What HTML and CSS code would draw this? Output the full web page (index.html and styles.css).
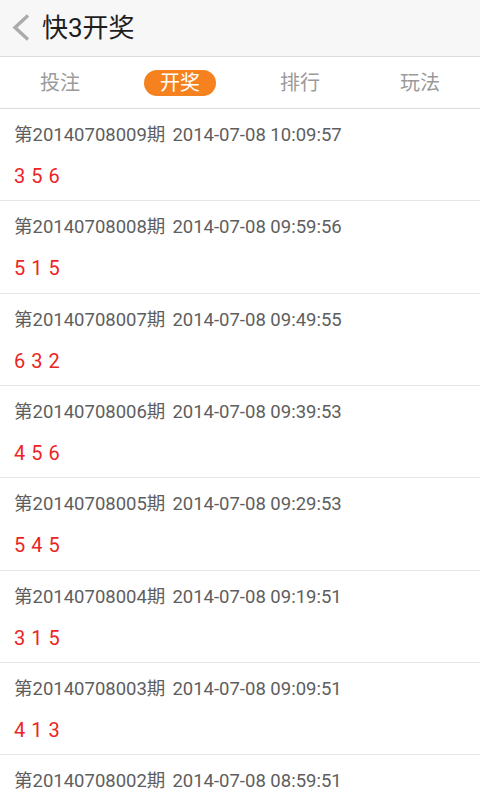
FILE: index.html
```html
<!DOCTYPE html>
<html lang="zh-CN">
<head>
<meta charset="utf-8">
<title>快3开奖</title>
<link rel="stylesheet" href="styles.css">
</head>
<body>
<div class="app">
  <header class="topbar">
    <svg class="back" width="22" height="34" viewBox="0 0 22 34">
      <polyline points="17,4.5 4,16.5 17,28.5" fill="none" stroke="#ababab" stroke-width="3.4"/>
    </svg>
    <h1 class="title">快3开奖</h1>
  </header>
  <nav class="tabs">
    <div class="tab">投注</div>
    <div class="tab"><span class="pill">开奖</span></div>
    <div class="tab">排行</div>
    <div class="tab">玩法</div>
  </nav>
  <ul class="list">
    <li class="row"><div class="meta"><span>第20140708009期</span><span class="time">2014-07-08 10:09:57</span></div><div class="nums">3 5 6</div></li>
    <li class="row"><div class="meta"><span>第20140708008期</span><span class="time">2014-07-08 09:59:56</span></div><div class="nums">5 1 5</div></li>
    <li class="row"><div class="meta"><span>第20140708007期</span><span class="time">2014-07-08 09:49:55</span></div><div class="nums">6 3 2</div></li>
    <li class="row"><div class="meta"><span>第20140708006期</span><span class="time">2014-07-08 09:39:53</span></div><div class="nums">4 5 6</div></li>
    <li class="row"><div class="meta"><span>第20140708005期</span><span class="time">2014-07-08 09:29:53</span></div><div class="nums">5 4 5</div></li>
    <li class="row"><div class="meta"><span>第20140708004期</span><span class="time">2014-07-08 09:19:51</span></div><div class="nums">3 1 5</div></li>
    <li class="row"><div class="meta"><span>第20140708003期</span><span class="time">2014-07-08 09:09:51</span></div><div class="nums">4 1 3</div></li>
    <li class="row last"><div class="meta"><span>第20140708002期</span><span class="time">2014-07-08 08:59:51</span></div></li>
  </ul>
</div>
</body>
</html>
```
FILE: styles.css
```css
* { box-sizing: border-box; }
html, body { margin: 0; padding: 0; }
body {
  width: 480px;
  height: 800px;
  overflow: hidden;
  background: #ffffff;
  font-family: Roboto, "Noto Sans CJK SC", sans-serif;
}
.app { display: flex; flex-direction: column; }
.topbar {
  height: 57px;
  background: #f7f7f7;
  border-bottom: 1px solid #dcdcdc;
  display: flex;
  align-items: center;
  padding-left: 11px;
}
.back { display: block; margin-right: 9px; }
.title {
  margin: 0;
  font-size: 26px;
  font-weight: normal;
  color: #1e1e1e;
  line-height: 30px;
}
.tabs {
  height: 52px;
  display: grid;
  grid-template-columns: repeat(4, 1fr);
  border-bottom: 1px solid #dcdcdc;
  background: #ffffff;
}
.tab {
  display: flex;
  align-items: center;
  justify-content: center;
  font-size: 20px;
  color: #9a9a9a;
  line-height: 26px;
}
.pill {
  display: inline-flex;
  align-items: center;
  justify-content: center;
  width: 72px;
  height: 26px;
  border-radius: 13px;
  background: #f5821f;
  color: #ffffff;
}
.list { list-style: none; margin: 0; padding: 0; }
.row {
  height: 92.33px;
  border-bottom: 1px solid #e6e6e6;
  padding: 14px 14px 0 14px;
}
.row.last { border-bottom: none; }
.meta {
  font-size: 18.5px;
  line-height: 24px;
  color: #5e5e5e;
  white-space: nowrap;
}
.time { margin-left: 7px; }
.nums {
  margin-top: 17px;
  font-size: 20px;
  line-height: 24px;
  color: #ec2424;
  word-spacing: 1px;
}
```
